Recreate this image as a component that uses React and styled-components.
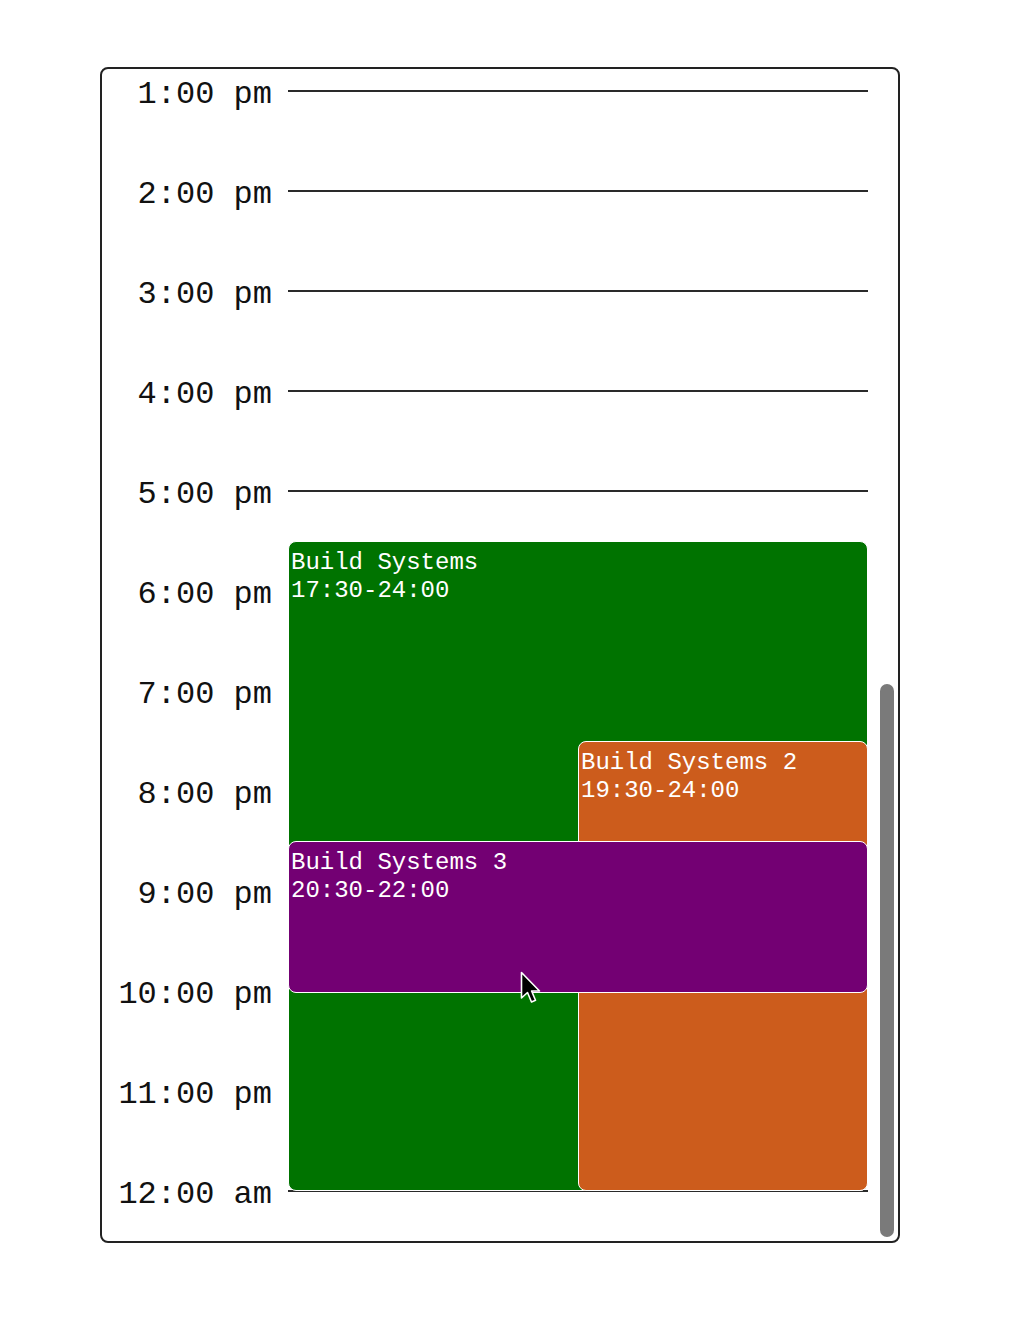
import React, { useLayoutEffect, useRef } from "react";
import styled, { createGlobalStyle } from "styled-components";

const Global = createGlobalStyle`
  html, body { margin: 0; padding: 0; background: #ffffff; }
  body { font-family: "Liberation Mono", "DejaVu Sans Mono", monospace; }
`;

const Page = styled.div`
  position: relative;
  width: 1014px;
  height: 1338px;
  padding: 67px 0 0 100px;
  box-sizing: border-box;
`;

const Frame = styled.div`
  position: relative;
  width: 800px;
  height: 1176px;
  box-sizing: border-box;
  border: 2px solid #222;
  border-radius: 8px;
  overflow: hidden;
`;

const Scroller = styled.div`
  height: 100%;
  overflow-y: scroll;
  scrollbar-width: none;
  &::-webkit-scrollbar { display: none; }
`;

const ScrollThumb = styled.div`
  position: absolute;
  right: 4px;
  bottom: 4px;
  width: 14px;
  height: 553px;
  border-radius: 7px;
  background: #7a7a7a;
`;

const Timeline = styled.div`
  position: relative;
  padding-right: 30px;
`;

const Row = styled.div`
  display: flex;
  align-items: center;
  height: 100px;
`;

const Label = styled.div`
  width: 170px;
  margin-right: 16px;
  text-align: right;
  font-size: 32px;
  line-height: 1;
  padding-top: 7px;
  color: #111;
  white-space: pre;
`;

const Line = styled.div`
  flex: 1;
  height: 2px;
  background: #2a2a2a;
`;

const EventLayer = styled.div`
  position: absolute;
  top: 0;
  bottom: 0;
  left: 186px;
  right: 30px;
`;

const Event = styled.div`
  position: absolute;
  box-sizing: border-box;
  background: ${(p) => p.$color};
  border: 1.5px solid #ffffff;
  border-radius: 8px;
  color: #ffffff;
  font-size: 24px;
  line-height: 28px;
  padding: 7px 2px 5px;
  white-space: pre;
  overflow: hidden;
`;

const Cursor = styled.svg`
  position: absolute;
  left: 520px;
  top: 971px;
  pointer-events: none;
`;

const hours = Array.from({ length: 25 }, (_, i) => {
  const h = i % 12 === 0 ? 12 : i % 12;
  const suffix = i < 12 || i === 24 ? "am" : "pm";
  return `${h}:00 ${suffix}`;
});

const events = [
  { title: "Build Systems", start: 17.5, end: 24, range: "17:30-24:00", color: "#007300", left: 0, width: 100, extra: 0 },
  { title: "Build Systems 2", start: 19.5, end: 24, range: "19:30-24:00", color: "#cc5c1c", left: 50, width: 50, extra: 0 },
  { title: "Build Systems 3", start: 20.5, end: 22, range: "20:30-22:00", color: "#730073", left: 0, width: 100, extra: 2 },
];

export default function App() {
  const ref = useRef(null);
  useLayoutEffect(() => {
    if (ref.current) ref.current.scrollTop = ref.current.scrollHeight;
  }, []);
  return (
    <Page>
      <Global />
      <Frame>
        <Scroller ref={ref}>
          <Timeline>
            {hours.map((h, i) => (
              <Row key={i}>
                <Label>{h}</Label>
                <Line />
              </Row>
            ))}
            <EventLayer>
              {events.map((e) => (
                <Event
                  key={e.title}
                  $color={e.color}
                  style={{
                    top: 50 + e.start * 100,
                    height: (e.end - e.start) * 100 + e.extra,
                    left: `${e.left}%`,
                    width: `${e.width}%`,
                  }}
                >
                  {e.title}
                  {"\n"}
                  {e.range}
                </Event>
              ))}
            </EventLayer>
          </Timeline>
        </Scroller>
        <ScrollThumb />
      </Frame>
      <Cursor width="24" height="36" viewBox="0 0 24 36">
        <path
          d="M1.5 1.5 L1.5 27 L7.5 21.5 L11.5 31 L15.5 29.3 L11.6 20 L19.5 20 Z"
          fill="#000"
          stroke="#fff"
          strokeWidth="1.6"
          strokeLinejoin="round"
        />
      </Cursor>
    </Page>
  );
}
